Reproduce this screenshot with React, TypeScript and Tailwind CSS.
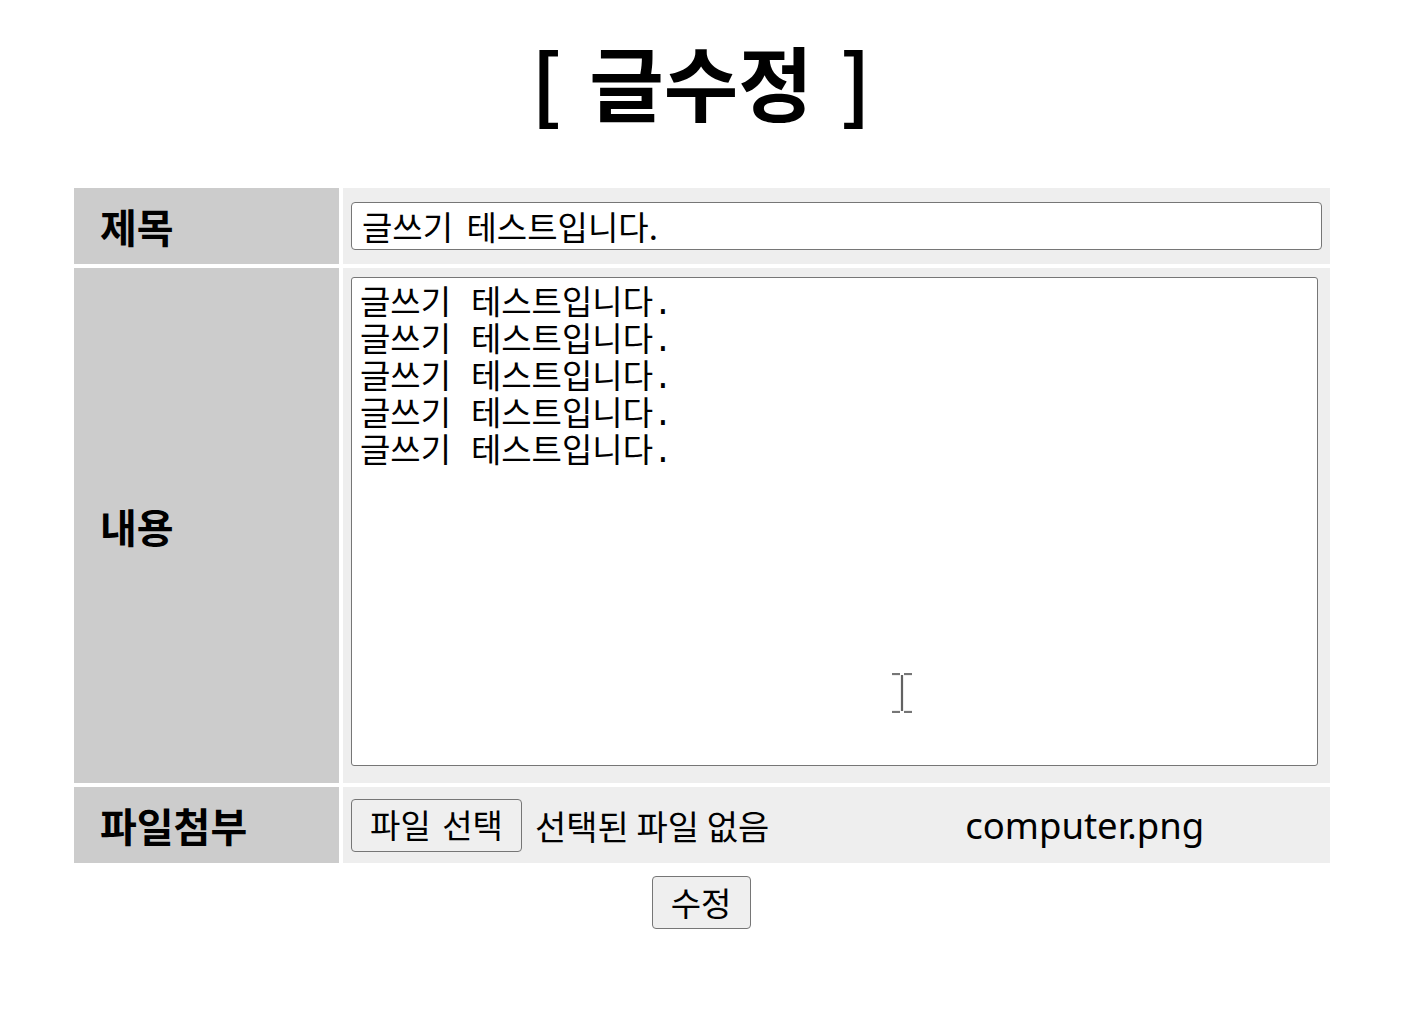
const kr = "font-['Noto_Sans_CJK_KR',sans-serif]"

const lines = Array(5).fill("글쓰기 테스트입니다.").join("\n")

const App = () => {
  return (
    <div className={`min-h-screen bg-white text-black ${kr}`}>
      <h1 className="pt-[30px] pb-[54px] text-center text-[81px] font-bold leading-[100px] [word-spacing:9px]">[ 글수정 ]</h1>

      <table className="mx-auto w-[1264px] translate-x-[1px] border-separate border-spacing-[4px]">
        <tbody>
          <tr>
            <th className="h-[76px] w-[265px] bg-[#cccccc] pl-[26px] text-left text-[40px] font-bold">제목</th>
            <td className="h-[76px] bg-[#eeeeee] px-[8px] align-middle">
              <input
                type="text"
                defaultValue="글쓰기 테스트입니다."
                className={`block h-[48px] w-full rounded-[4px] border border-[#767676] bg-white px-[10px] text-[33px] leading-[46px] outline-none [word-spacing:6px] ${kr}`}
              />
            </td>
          </tr>
          <tr>
            <th className="h-[515px] bg-[#cccccc] pl-[26px] text-left text-[40px] font-bold">내용</th>
            <td className="relative h-[515px] bg-[#eeeeee] pl-[8px] pr-[12px] pt-[9px] pb-[17px] align-top">
              <textarea
                defaultValue={lines}
                className="block h-[489px] w-full resize-none rounded-[3px] border border-[#767676] bg-white px-[8px] pt-[9px] font-['Liberation_Mono','Noto_Sans_CJK_KR',monospace] text-[33px] leading-[37px] outline-none"
              />
              <svg className="absolute left-[546px] top-[405px]" width="26" height="40" viewBox="0 0 26 40">
                <path d="M3 1h8M15 1h8M3 39h8M15 39h8M13 2v36" stroke="#ddd" strokeWidth="3" fill="none" />
                <path d="M3 1h8M15 1h8M3 39h8M15 39h8M13 2v36" stroke="#111" strokeWidth="1.2" fill="none" />
              </svg>
            </td>
          </tr>
          <tr>
            <th className="h-[76px] bg-[#cccccc] pl-[26px] text-left text-[40px] font-bold">파일첨부</th>
            <td className="h-[76px] bg-[#eeeeee] px-[8px] align-middle">
              <div className="flex items-center">
                <button className="h-[53px] w-[171px] rounded-[4px] border border-[#767676] bg-[#efefef] text-[33px] [word-spacing:4px]">파일 선택</button>
                <span className="ml-[13px] text-[34px]">선택된 파일 없음</span>
                <span className="ml-[196px] font-['Noto_Sans',sans-serif] text-[36.5px]">computer.png</span>
              </div>
            </td>
          </tr>
        </tbody>
      </table>

      <div className="mt-[9px] flex justify-center">
        <button className="h-[53px] w-[99px] rounded-[4px] border border-[#767676] bg-[#efefef] text-[33px]">수정</button>
      </div>
    </div>
  )
}

export default App
